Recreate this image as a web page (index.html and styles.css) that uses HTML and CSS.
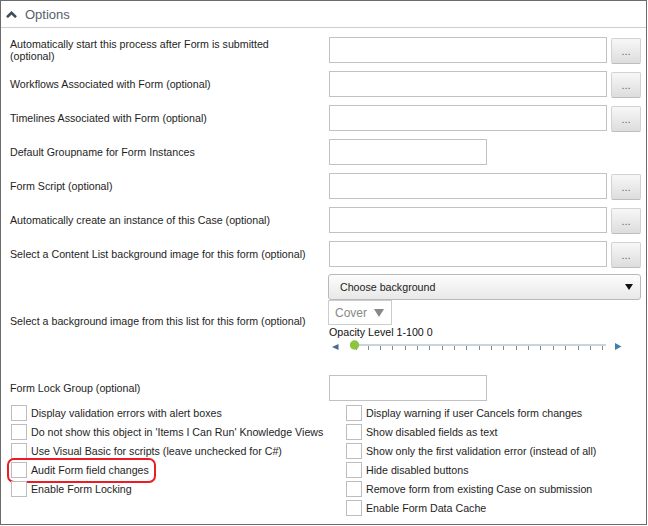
FILE: index.html
```html
<!DOCTYPE html>
<html lang="en">
<head>
    <meta charset="UTF-8">
    <title>Form Options</title>
    <link rel="stylesheet" href="styles.css">
</head>
<body>
  <div class="panel">
      <div class="panel-header">
          <svg class="chevron" width="11" height="7" viewBox="0 0 11 7">
              <polyline points="1,6.2 5.5,1.8 10,6.2" fill="none" stroke="#3f4b57" stroke-width="2.6"/>
          </svg>
          <span>Options</span>
      </div>
      <div class="panel-body">
          <div class="form-row">
              <label class="form-label">Automatically start this process after Form is submitted (optional)</label>
              <div class="form-field">
                  <input class="text-input" type="text">
                  <button class="btn-browse">...</button>
              </div>
          </div>
          <div class="form-row">
              <label class="form-label">Workflows Associated with Form (optional)</label>
              <div class="form-field">
                  <input class="text-input" type="text">
                  <button class="btn-browse">...</button>
              </div>
          </div>
          <div class="form-row">
              <label class="form-label">Timelines Associated with Form (optional)</label>
              <div class="form-field">
                  <input class="text-input" type="text">
                  <button class="btn-browse">...</button>
              </div>
          </div>
          <div class="form-row group-row">
              <label class="form-label">Default Groupname for Form Instances</label>
              <div class="form-field">
                  <input class="text-input short" type="text">
              </div>
          </div>
          <div class="form-row">
              <label class="form-label">Form Script (optional)</label>
              <div class="form-field">
                  <input class="text-input" type="text">
                  <button class="btn-browse">...</button>
              </div>
          </div>
          <div class="form-row">
              <label class="form-label">Automatically create an instance of this Case (optional)</label>
              <div class="form-field">
                  <input class="text-input" type="text">
                  <button class="btn-browse">...</button>
              </div>
          </div>
          <div class="form-row">
              <label class="form-label">Select a Content List background image for this form (optional)</label>
              <div class="form-field">
                  <input class="text-input" type="text">
                  <button class="btn-browse">...</button>
              </div>
          </div>
          <div class="form-row background-row">
              <label class="form-label">Select a background image from this list for this form (optional)</label>
              <div class="form-field flex-column">
                  <div class="select-box">
                      <span>Choose background</span>
                      <svg width="8" height="6" viewBox="0 0 8 6"><polygon points="0,0 8,0 4,6" fill="#111"/></svg>
                  </div>
                  <div class="cover-select">
                      <span>Cover</span>
                      <svg width="10" height="8" viewBox="0 0 10 8"><polygon points="0,0 10,0 5,8" fill="#888"/></svg>
                  </div>
                  <div class="opacity-label">Opacity Level 1-100 0</div>
                  <svg class="slider" width="312" height="14" viewBox="0 0 312 14">
                      <polygon points="9.5,5 3,8 9.5,11" fill="#4d6b88"/>
                      <rect x="25" y="5" width="252" height="2" fill="#c9d5dc"/>
                      <g stroke="#7c8d9a" stroke-width="1">
                          <line x1="27.5" y1="7" x2="27.5" y2="11"/>
                          <line x1="39.5" y1="7" x2="39.5" y2="11"/>
                          <line x1="51.5" y1="7" x2="51.5" y2="11"/>
                          <line x1="63.5" y1="7" x2="63.5" y2="11"/>
                          <line x1="76.5" y1="7" x2="76.5" y2="11"/>
                          <line x1="88.5" y1="7" x2="88.5" y2="11"/>
                          <line x1="100.5" y1="7" x2="100.5" y2="11"/>
                          <line x1="113.5" y1="7" x2="113.5" y2="11"/>
                          <line x1="125.5" y1="7" x2="125.5" y2="11"/>
                          <line x1="137.5" y1="7" x2="137.5" y2="11"/>
                          <line x1="150.5" y1="7" x2="150.5" y2="11"/>
                          <line x1="162.5" y1="7" x2="162.5" y2="11"/>
                          <line x1="174.5" y1="7" x2="174.5" y2="11"/>
                          <line x1="187.5" y1="7" x2="187.5" y2="11"/>
                          <line x1="199.5" y1="7" x2="199.5" y2="11"/>
                          <line x1="211.5" y1="7" x2="211.5" y2="11"/>
                          <line x1="224.5" y1="7" x2="224.5" y2="11"/>
                          <line x1="236.5" y1="7" x2="236.5" y2="11"/>
                          <line x1="249.5" y1="7" x2="249.5" y2="11"/>
                          <line x1="261.5" y1="7" x2="261.5" y2="11"/>
                          <line x1="273.5" y1="7" x2="273.5" y2="11"/>
                      </g>
                      <circle cx="25.5" cy="6" r="4.7" fill="#8dc540"/>
                      <polygon points="286,4 292.5,7.5 286,11" fill="#3f7fa8"/>
                  </svg>
              </div>
          </div>
          <div class="form-row lock-row">
              <label class="form-label">Form Lock Group (optional)</label>
              <div class="form-field">
                  <input class="text-input short" type="text">
              </div>
          </div>

          <div class="check-grid">
              <div class="check-col">
                  <label class="check-item"><input type="checkbox" class="check-box">Display validation errors with alert boxes</label>
                  <label class="check-item"><input type="checkbox" class="check-box">Do not show this object in 'Items I Can Run' Knowledge Views</label>
                  <label class="check-item"><input type="checkbox" class="check-box">Use Visual Basic for scripts (leave unchecked for C#)</label>
                  <label class="check-item"><input type="checkbox" class="check-box">Audit Form field changes<span class="highlight"></span></label>
                  <label class="check-item"><input type="checkbox" class="check-box">Enable Form Locking</label>
              </div>
              <div class="check-col">
                  <label class="check-item"><input type="checkbox" class="check-box">Display warning if user Cancels form changes</label>
                  <label class="check-item"><input type="checkbox" class="check-box">Show disabled fields as text</label>
                  <label class="check-item"><input type="checkbox" class="check-box">Show only the first validation error (instead of all)</label>
                  <label class="check-item"><input type="checkbox" class="check-box">Hide disabled buttons</label>
                  <label class="check-item"><input type="checkbox" class="check-box">Remove form from existing Case on submission</label>
                  <label class="check-item"><input type="checkbox" class="check-box">Enable Form Data Cache</label>
              </div>
          </div>
      </div>
  </div>
</body>
</html>
```

FILE: styles.css
```css
/* General */

*
{
    box-sizing: border-box;
}
body
{
    margin: 0;
    background-color: #fff;
    font-family: "Liberation Sans", Arial, sans-serif;
    font-size: 8pt;
    color: #1e1e1e;
}

/* Panel */

.panel
{
    width: 647px;
    height: 525px;
    border: 1px solid #6b6b6b;
    background-color: #fff;
    overflow: hidden;
}
.panel-header
{
    display: flex;
    align-items: center;
    gap: 8px;
    height: 27px;
    padding-left: 5px;
    border-bottom: 1px solid #cfcfcf;
    font-size: 13px;
    color: #56616b;
}
.panel-body
{
    padding: 9px 5px 0 9px;
}

/* Form rows */

.form-row
{
    display: flex;
    align-items: center;
    margin-bottom: 8px;
}
.group-row
{
    margin-top: 1px;
}
.background-row
{
    margin-top: -1px;
}
.lock-row
{
    margin-bottom: 4px;
}
.form-label
{
    width: 319px;
    padding-right: 19px;
    line-height: 12px;
}
.form-field
{
    display: flex;
    width: 312px;
}
.flex-column
{
    flex-direction: column;
    align-items: flex-start;
}
.text-input
{
    flex: 1;
    min-width: 0;
    height: 26px;
    margin: 0;
    padding: 0 4px;
    border: 1px solid #c2c2c2;
    background-color: #fff;
    font: inherit;
}
.text-input.short
{
    flex: none;
    width: 158px;
}
.btn-browse
{
    width: 30px;
    height: 26px;
    margin: 1px 0 -1px 4px;
    padding: 0;
    border: 1px solid #d2d2d2;
    border-bottom-color: #bdbdbd;
    border-radius: 2px;
    background: linear-gradient(#f7f7f7, #dddddd);
    font-family: inherit;
    font-size: 11px;
    color: #5a6a7a;
}

/* Background picker */

.select-box
{
    display: flex;
    align-items: center;
    justify-content: space-between;
    width: 313px;
    height: 26px;
    margin-left: -1px;
    padding: 0 7px 0 11px;
    border: 1px solid #b9b9b9;
    border-radius: 3px;
    background: linear-gradient(#fdfdfd, #e8e8e8);
    color: #222;
}
.cover-select
{
    display: flex;
    align-items: center;
    gap: 7px;
    width: 64px;
    height: 25px;
    margin-left: -1px;
    padding-left: 6px;
    border: 1px solid #cccccc;
    font-size: 12px;
    color: #888;
}
.opacity-label
{
    margin-top: 1px;
    line-height: 13px;
    color: #111;
}
.slider
{
    display: block;
    margin-bottom: 14px;
}

/* Checkboxes */

.check-grid
{
    display: grid;
    grid-template-columns: 335px 1fr;
    padding-left: 1px;
}
.check-col
{
    display: flex;
    flex-direction: column;
}
.check-item
{
    position: relative;
    display: flex;
    align-items: flex-start;
    gap: 4px;
    height: 19px;
    line-height: 16px;
    white-space: nowrap;
}
.check-box
{
    appearance: none;
    flex: none;
    width: 16px;
    height: 16px;
    margin: 0;
    border: 1px solid #bdbdbd;
    background-color: #fff;
}
.highlight
{
    position: absolute;
    left: -4px;
    top: -4px;
    width: 149px;
    height: 25px;
    border: 2px solid #ec1c24;
    border-radius: 7px;
    pointer-events: none;
}
```
